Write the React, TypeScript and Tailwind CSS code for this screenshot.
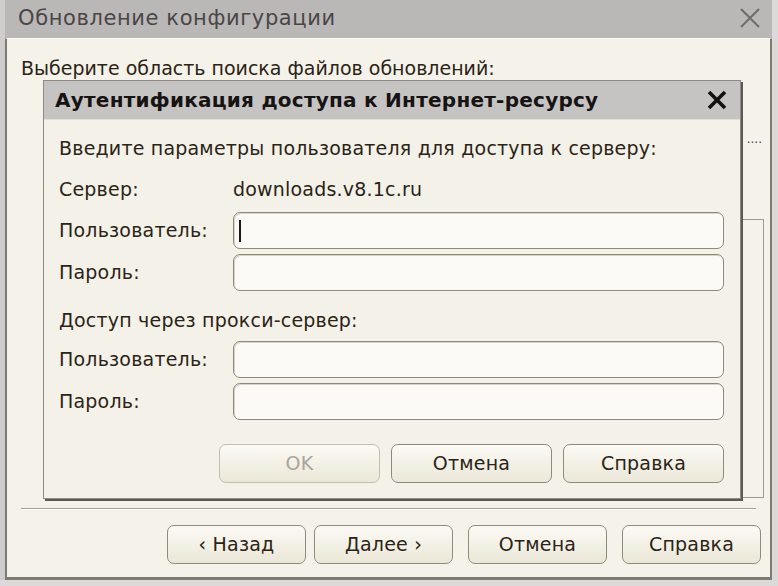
import React from 'react';

const font = { fontFamily: '"DejaVu Sans", "Liberation Sans", sans-serif' };

function Field({ caret }: { caret?: boolean }) {
  return (
    <div className="h-[37px] flex-1 rounded-[7px] border border-[#8d8a78] bg-[#fbfaf6] shadow-[inset_1px_1px_0_#d8d5c8] flex items-center px-[5px]">
      {caret && <div className="w-[2px] h-[22px] bg-[#1a1a1a]" />}
    </div>
  );
}

function Button({ label, disabled, w, className = '' }: { label: string; disabled?: boolean; w: string; className?: string }) {
  return (
    <div
      className={`${w} ${className} h-[39px] rounded-[7px] border flex items-center justify-center text-[19px] tracking-[0.2px] bg-gradient-to-b from-[#fbfaf4] to-[#ebe7d8] ${
        disabled ? 'border-[#c2beb0] text-[#a8a49a]' : 'border-[#8f8b7a] text-[#2b2416]'
      }`}
    >
      {label}
    </div>
  );
}

function Row({ label, caret }: { label: string; caret?: boolean }) {
  return (
    <div className="flex items-center">
      <div className="w-[174px]">{label}</div>
      <Field caret={caret} />
    </div>
  );
}

export default function App() {
  return (
    <div className="w-[778px] h-[586px] bg-[#dcdad8] relative overflow-hidden text-[#2b2416]" style={font}>
      {/* outer window */}
      <div className="absolute left-0 top-0 w-[772px] h-[580px] border-l-[5px] border-[#cfcdcb] flex flex-col">
        <div className="h-[38px] bg-[#bab7b7] flex items-center justify-between pl-[13px] pr-[10px] shrink-0">
          <span className="text-[21px] text-[#4a4646] tracking-[0.6px]">Обновление конфигурации</span>
          <svg width="24" height="24" viewBox="0 0 24 24" className="mt-[-2px]">
            <path d="M3 3 L21 21 M21 3 L3 21" stroke="#6f6c6c" strokeWidth="2" />
          </svg>
        </div>
        <div className="flex-1 bg-[#f4f2e9] border-l-2 border-r-2 border-b-[3px] border-[#7d7a72] border-t border-t-[#ffffff] flex flex-col">
          <div className="pl-[14px] pt-[15px] text-[19px]">Выберите область поиска файлов обновлений:</div>
          <div className="flex-1 relative">
            <div className="absolute right-[8px] top-[50px] text-[12px] leading-none text-[#444]">....</div>
            <div className="absolute right-[6px] top-[136px] w-[22px] bottom-[10px] border border-[#9e9a8e]" />
          </div>
          <div className="mx-[14px] h-[2px] border-t border-[#a29f93] border-b border-b-white" />
          <div className="flex justify-end pr-[9px] pt-[15px] pb-[13px]">
            <Button label="‹ Назад" w="w-[139px]" />
            <Button label="Далее ›" w="w-[139px]" className="ml-[8px]" />
            <Button label="Отмена" w="w-[139px]" className="ml-[15px]" />
            <Button label="Справка" w="w-[139px]" className="ml-[15px]" />
          </div>
        </div>
      </div>

      {/* modal dialog */}
      <div className="absolute left-[43px] top-[80px] w-[698px] h-[419px] border border-[#8e8b86] shadow-[2px_2px_0_#5d5a55] flex flex-col">
        <div className="h-[38px] bg-[#c6c3c3] flex items-center justify-between pl-[11px] pr-[12px] shrink-0">
          <span className="text-[20px] font-bold text-[#161412] tracking-[0.25px]">Аутентификация доступа к Интернет-ресурсу</span>
          <svg width="22" height="22" viewBox="0 0 22 22">
            <path d="M3 3 L19 19 M19 3 L3 19" stroke="#111" strokeWidth="3.6" />
          </svg>
        </div>
        <div className="flex-1 bg-[#f3f1e8] border-t border-[#e2dfd4] pl-[15px] pr-[16px] text-[19px] tracking-[0.2px] flex flex-col">
          <div className="pt-[14px] h-[54px]">Введите параметры пользователя для доступа к серверу:</div>
          <div className="flex h-[38px] items-start pt-[1px]">
            <div className="w-[174px]">Сервер:</div>
            <div>downloads.v8.1c.ru</div>
          </div>
          <div className="flex flex-col gap-[5px]">
            <Row label="Пользователь:" caret />
            <Row label="Пароль:" />
          </div>
          <div className="pt-[15px] h-[50px]">Доступ через прокси-сервер:</div>
          <div className="flex flex-col gap-[5px]">
            <Row label="Пользователь:" />
            <Row label="Пароль:" />
          </div>
          <div className="flex justify-end gap-[11px] pt-[24px]">
            <Button label="OK" disabled w="w-[161px]" />
            <Button label="Отмена" w="w-[161px]" />
            <Button label="Справка" w="w-[161px]" />
          </div>
        </div>
      </div>
    </div>
  );
}
